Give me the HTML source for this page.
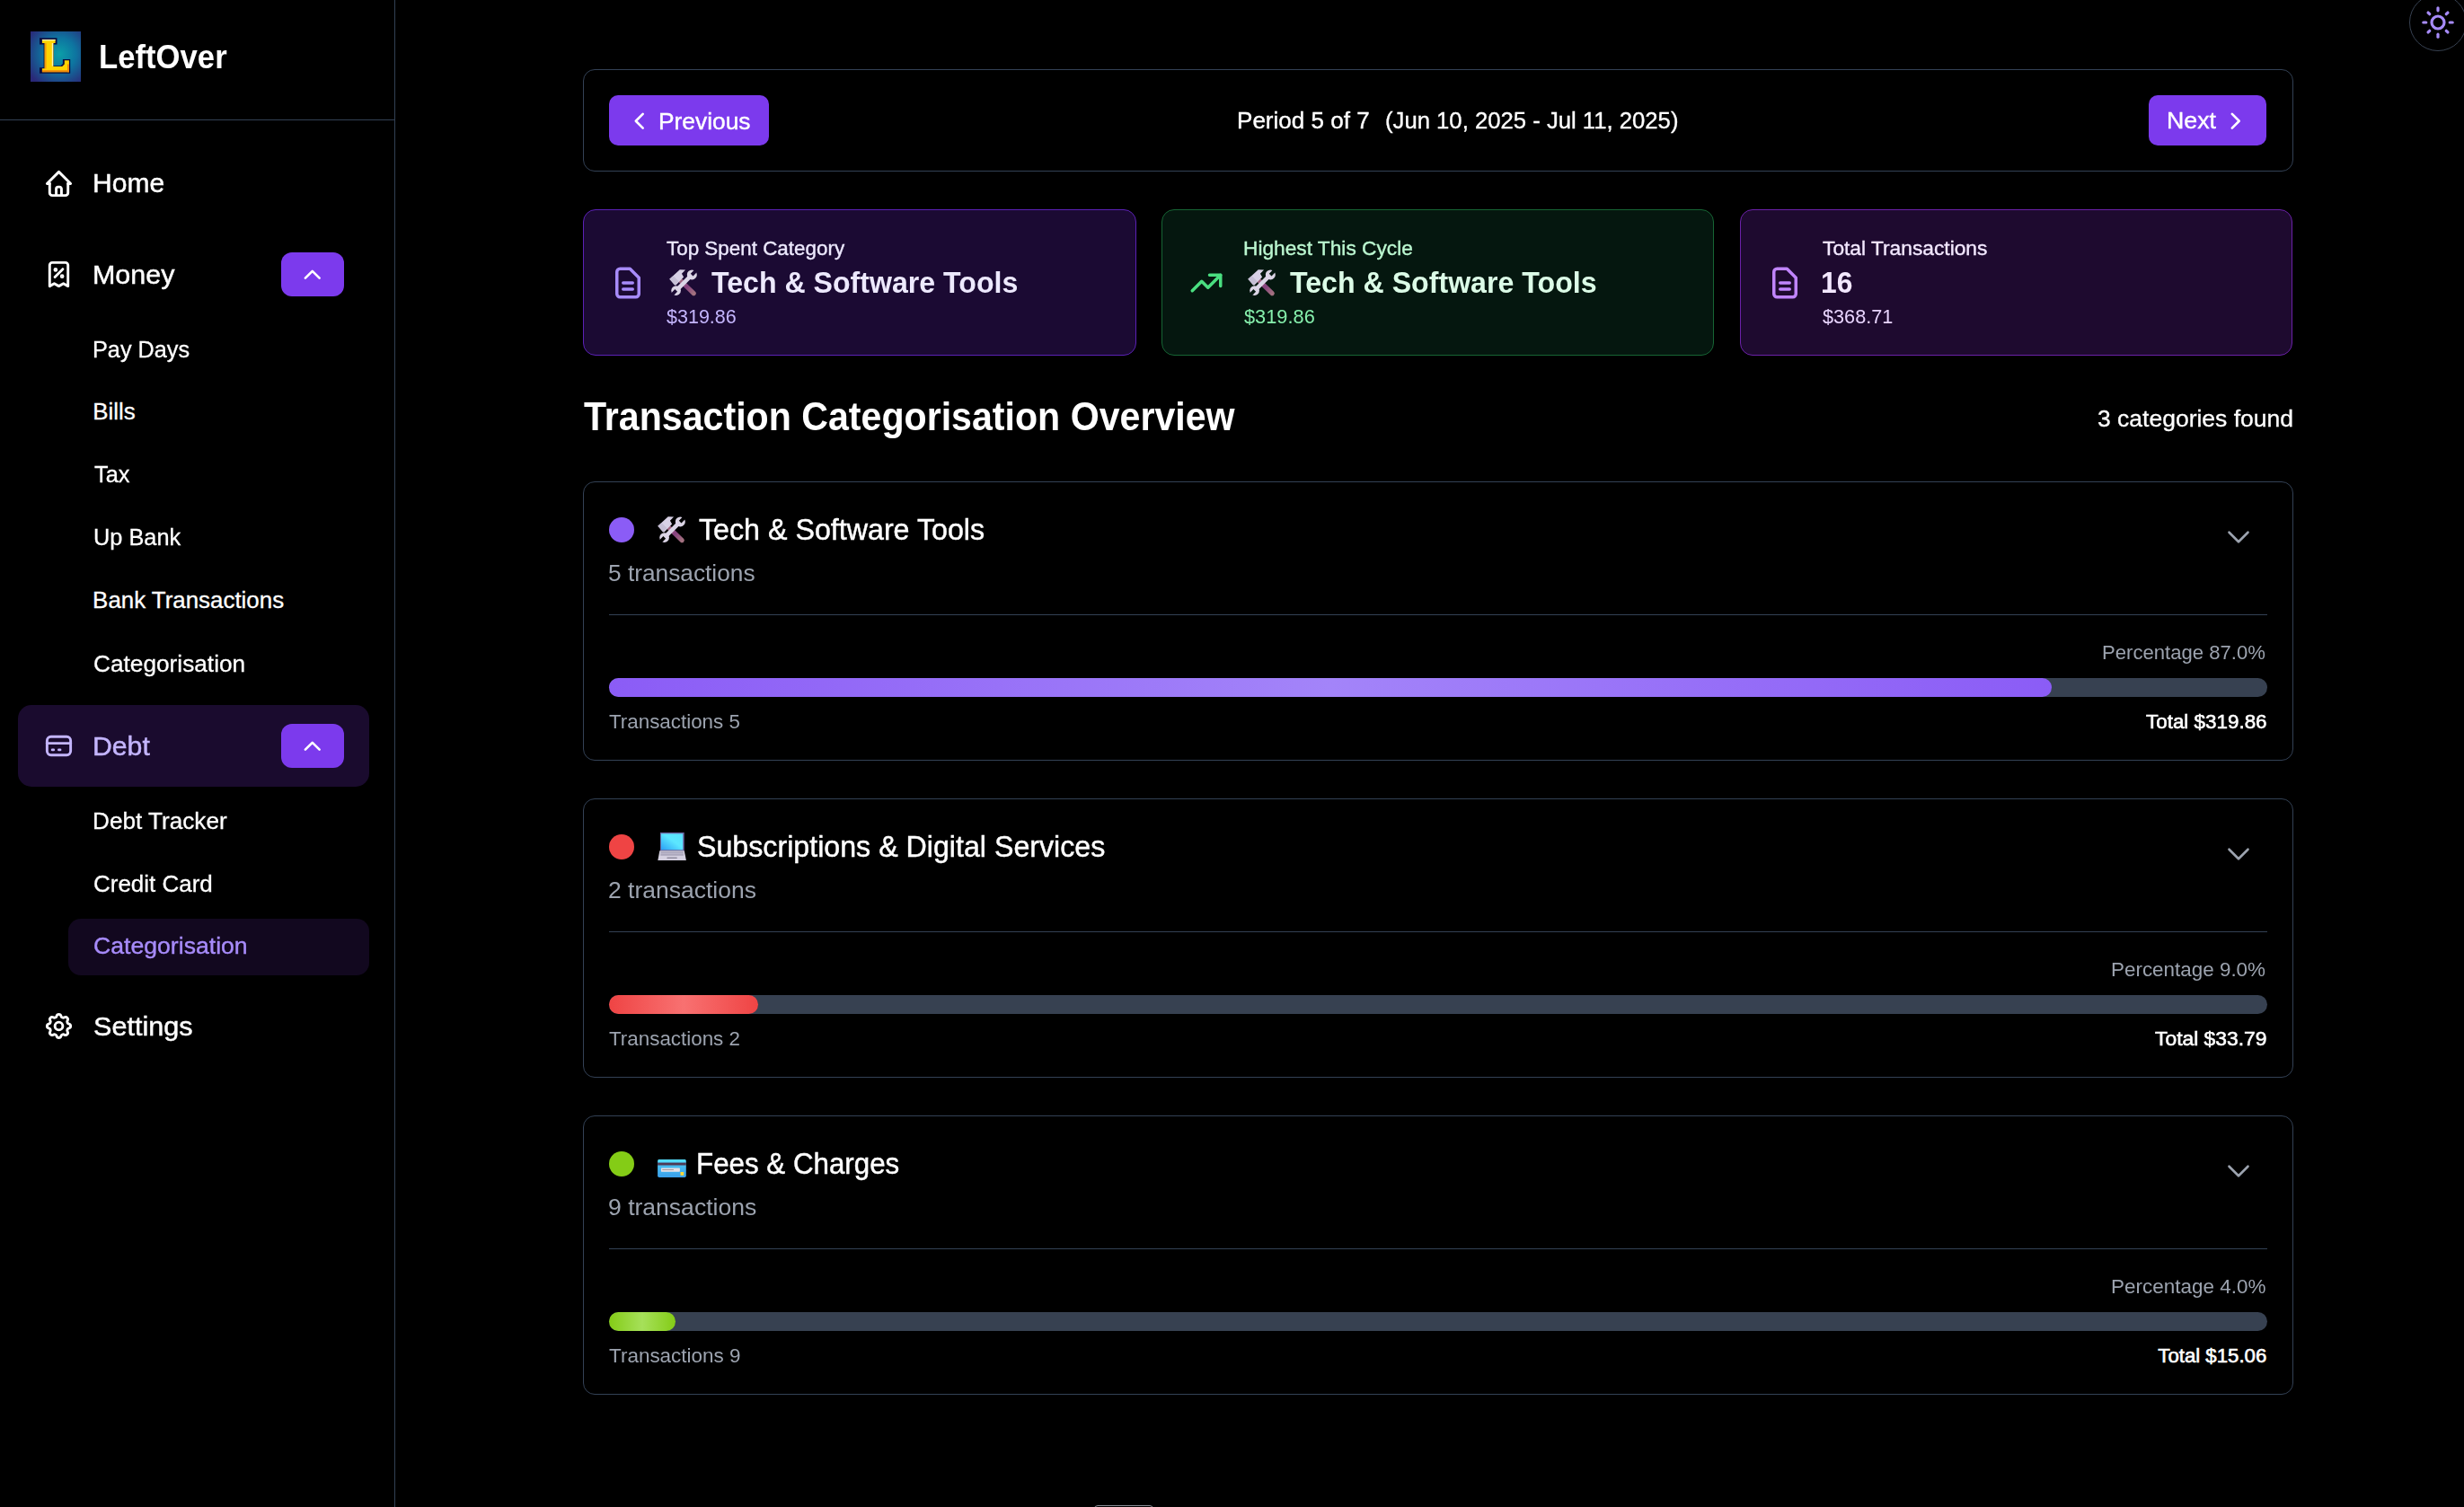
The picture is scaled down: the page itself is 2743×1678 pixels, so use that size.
<!DOCTYPE html>
<html><head><meta charset="utf-8"><title>LeftOver - Categorisation</title>
<style>
html,body{margin:0;padding:0;}
body{width:2743px;height:1678px;background:#000;position:relative;overflow:hidden;font-family:"Liberation Sans",sans-serif;}
.t{position:absolute;white-space:nowrap;line-height:1;font-family:"Liberation Sans",sans-serif;}
svg{overflow:visible}
</style></head><body>
<div style="position:absolute;left:439px;top:0px;width:1px;height:1678px;background:#334155;border-radius:0px;box-sizing:border-box;"></div>
<div style="position:absolute;left:0px;top:133px;width:439px;height:1px;background:#334155;border-radius:0px;box-sizing:border-box;"></div>
<svg style="position:absolute;left:34px;top:35px;" width="56" height="56" viewBox="0 0 56 56" fill="none">
<defs><radialGradient id="lg" cx="0.58" cy="0.45" r="0.72">
<stop offset="0" stop-color="#0b9ea8"/><stop offset="0.45" stop-color="#0e74a0"/><stop offset="1" stop-color="#2a2878"/></radialGradient>
</defs>
<rect width="56" height="56" fill="url(#lg)"/>
<path d="M10 7.2H29.5V14.6H25.8V38.3H33.6L35.9 36V31H44.2V46.8H10V40.2H14.6V14.6H10Z" fill="#0b0b3d"/>
<path d="M12.9 8.9H27.6V13H25.3V39.1H35.2L37.8 36.5V32.3H42.9V45.2H12.9V41.2H15.7V13H12.9Z" fill="#ffd400"/>
<path d="M12.9 8.9H27.6V10.3H12.9Z" fill="#fff3a8"/>
<path d="M15.7 13H17.6V41.5H15.7Z" fill="#f59e0b"/>
<path d="M12.9 43.2H42.9V45.2H12.9Z" fill="#f08a0b"/>
<path d="M23.8 13H25.3V38.5H23.8Z" fill="#fff6b0"/>
<path d="M41 36.5H42.9V45.2H41Z" fill="#f08a0b"/>
</svg>
<div class="t" style="left:110.43px;top:44.73px;font-size:37px;font-weight:700;color:#fff;transform:scaleX(0.9376);transform-origin:left top;">LeftOver</div>
<svg style="position:absolute;left:48px;top:187px;" width="35" height="35" viewBox="0 0 24 24" fill="none"><g stroke="#fff" stroke-width="2" stroke-linecap="round" stroke-linejoin="round"><path d="M5 12H3l9-9 9 9h-2"/><path d="M5 12v7a2 2 0 0 0 2 2h10a2 2 0 0 0 2-2v-7"/><path d="M10 21v-5a1.5 1.5 0 0 1 1.5-1.5h1a1.5 1.5 0 0 1 1.5 1.5v5"/></g></svg>
<div class="t" style="left:102.88px;top:188.79px;font-size:29.6px;font-weight:400;color:#fff;transform:scaleX(1.0146);transform-origin:left top;-webkit-text-stroke:0.45px #fff;">Home</div>
<svg style="position:absolute;left:48px;top:288px;" width="35" height="35" viewBox="0 0 24 24" fill="none"><g stroke="#fff" stroke-width="2" stroke-linecap="round" stroke-linejoin="round"><path d="M9 14l6-6"/><circle cx="9.5" cy="8.5" r=".6" fill="#fff"/><circle cx="14.5" cy="13.5" r=".6" fill="#fff"/><path d="M5 21V5a2 2 0 0 1 2-2h10a2 2 0 0 1 2 2v16l-3.5-2-3.5 2-3.5-2-3.5 2"/></g></svg>
<div class="t" style="left:102.85px;top:291.29px;font-size:29.6px;font-weight:400;color:#fff;transform:scaleX(1.0290);transform-origin:left top;-webkit-text-stroke:0.45px #fff;">Money</div>
<div style="position:absolute;left:313px;top:281px;width:70px;height:49px;background:#7c3aed;border-radius:12px;box-sizing:border-box;"></div>
<svg style="position:absolute;left:332.25px;top:289.75px;" width="31.5" height="31.5" viewBox="0 0 24 24" fill="none"><g stroke="#fff" stroke-width="2" stroke-linecap="round" stroke-linejoin="round"><path d="M6 15l6-6 6 6"/></g></svg>
<div class="t" style="left:103.17px;top:376.61px;font-size:25.9px;font-weight:400;color:#fff;transform:scaleX(0.9760);transform-origin:left top;-webkit-text-stroke:0.3px #fff;">Pay Days</div>
<div class="t" style="left:103.13px;top:446.21px;font-size:25.9px;font-weight:400;color:#fff;-webkit-text-stroke:0.3px #fff;">Bills</div>
<div class="t" style="left:104.75px;top:516.31px;font-size:25.9px;font-weight:400;color:#fff;transform:scaleX(0.9801);transform-origin:left top;-webkit-text-stroke:0.3px #fff;">Tax</div>
<div class="t" style="left:103.56px;top:586.41px;font-size:25.9px;font-weight:400;color:#fff;transform:scaleX(0.9784);transform-origin:left top;-webkit-text-stroke:0.3px #fff;">Up Bank</div>
<div class="t" style="left:103.12px;top:656.41px;font-size:25.9px;font-weight:400;color:#fff;-webkit-text-stroke:0.3px #fff;">Bank Transactions</div>
<div class="t" style="left:103.92px;top:726.51px;font-size:25.9px;font-weight:400;color:#fff;transform:scaleX(1.0131);transform-origin:left top;-webkit-text-stroke:0.3px #fff;">Categorisation</div>
<div style="position:absolute;left:20px;top:785px;width:391px;height:91px;background:#1a0b2e;border-radius:15px;box-sizing:border-box;"></div>
<svg style="position:absolute;left:48px;top:813px;" width="35" height="35" viewBox="0 0 24 24" fill="none"><g stroke="#c4b5fd" stroke-width="2" stroke-linecap="round" stroke-linejoin="round"><path d="M3 8a3 3 0 0 1 3-3h12a3 3 0 0 1 3 3v8a3 3 0 0 1-3 3H6a3 3 0 0 1-3-3z"/><path d="M3 10h18"/><path d="M7 15h1"/><path d="M12 15h1"/></g></svg>
<div class="t" style="left:102.87px;top:816.19px;font-size:29.6px;font-weight:400;color:#c4b5fd;transform:scaleX(1.0204);transform-origin:left top;-webkit-text-stroke:0.45px #c4b5fd;">Debt</div>
<div style="position:absolute;left:313px;top:806px;width:70px;height:49px;background:#7c3aed;border-radius:12px;box-sizing:border-box;"></div>
<svg style="position:absolute;left:332.25px;top:814.75px;" width="31.5" height="31.5" viewBox="0 0 24 24" fill="none"><g stroke="#fff" stroke-width="2" stroke-linecap="round" stroke-linejoin="round"><path d="M6 15l6-6 6 6"/></g></svg>
<div class="t" style="left:103.11px;top:901.91px;font-size:25.9px;font-weight:400;color:#fff;transform:scaleX(1.0097);transform-origin:left top;-webkit-text-stroke:0.3px #fff;">Debt Tracker</div>
<div class="t" style="left:103.93px;top:971.91px;font-size:25.9px;font-weight:400;color:#fff;transform:scaleX(1.0027);transform-origin:left top;-webkit-text-stroke:0.3px #fff;">Credit Card</div>
<div style="position:absolute;left:76px;top:1023px;width:335px;height:63px;background:#12081f;border-radius:14px;box-sizing:border-box;"></div>
<div class="t" style="left:103.96px;top:1041.11px;font-size:25.9px;font-weight:400;color:#a78bfa;transform:scaleX(1.0283);transform-origin:left top;-webkit-text-stroke:0.4px #a78bfa;">Categorisation</div>
<svg style="position:absolute;left:48px;top:1124.5px;" width="35" height="35" viewBox="0 0 24 24" fill="none"><g stroke="#fff" stroke-width="2" stroke-linecap="round" stroke-linejoin="round"><path d="M10.325 4.317c.426-1.756 2.924-1.756 3.35 0a1.724 1.724 0 0 0 2.573 1.066c1.543-.94 3.31.826 2.37 2.37a1.724 1.724 0 0 0 1.065 2.572c1.756.426 1.756 2.924 0 3.35a1.724 1.724 0 0 0-1.066 2.573c.94 1.543-.826 3.31-2.37 2.37a1.724 1.724 0 0 0-2.572 1.065c-.426 1.756-2.924 1.756-3.35 0a1.724 1.724 0 0 0-2.573-1.066c-1.543.94-3.31-.826-2.37-2.37a1.724 1.724 0 0 0-1.065-2.572c-1.756-.426-1.756-2.924 0-3.35a1.724 1.724 0 0 0 1.066-2.573c-.94-1.543.826-3.31 2.37-2.37 1 .608 2.296.07 2.572-1.065z"/><path d="M9 12a3 3 0 1 0 6 0a3 3 0 0 0-6 0"/></g></svg>
<div class="t" style="left:103.68px;top:1127.59px;font-size:29.6px;font-weight:400;color:#fff;transform:scaleX(1.0336);transform-origin:left top;-webkit-text-stroke:0.45px #fff;">Settings</div>
<div style="position:absolute;left:2682px;top:-7px;width:64px;height:64px;border:1.5px solid #374151;border-radius:50%;box-sizing:border-box"></div>
<svg style="position:absolute;left:2682px;top:-7px;" width="64" height="64" viewBox="0 0 64 64" fill="none"><circle cx="32" cy="32" r="7" stroke="#a78bfa" stroke-width="3.2"/><line x1="45.20" y1="32.00" x2="48.20" y2="32.00" stroke="#a78bfa" stroke-width="3.2" stroke-linecap="round"/><line x1="41.26" y1="41.26" x2="42.96" y2="42.96" stroke="#a78bfa" stroke-width="3.2" stroke-linecap="round"/><line x1="32.00" y1="45.20" x2="32.00" y2="48.20" stroke="#a78bfa" stroke-width="3.2" stroke-linecap="round"/><line x1="22.74" y1="41.26" x2="21.04" y2="42.96" stroke="#a78bfa" stroke-width="3.2" stroke-linecap="round"/><line x1="18.80" y1="32.00" x2="15.80" y2="32.00" stroke="#a78bfa" stroke-width="3.2" stroke-linecap="round"/><line x1="22.74" y1="22.74" x2="21.04" y2="21.04" stroke="#a78bfa" stroke-width="3.2" stroke-linecap="round"/><line x1="32.00" y1="18.80" x2="32.00" y2="15.80" stroke="#a78bfa" stroke-width="3.2" stroke-linecap="round"/><line x1="41.26" y1="22.74" x2="42.96" y2="21.04" stroke="#a78bfa" stroke-width="3.2" stroke-linecap="round"/></svg>
<div style="position:absolute;left:649px;top:77px;width:1904px;height:114px;background:none;border:1px solid #334155;border-radius:13px;box-sizing:border-box;"></div>
<div style="position:absolute;left:678px;top:106px;width:178px;height:56px;background:#7c3aed;border-radius:10px;box-sizing:border-box;"></div>
<svg style="position:absolute;left:695.5px;top:119px;" width="31.5" height="31.5" viewBox="0 0 24 24" fill="none"><g stroke="#fff" stroke-width="2" stroke-linecap="round" stroke-linejoin="round"><path d="M15 6l-6 6 6 6"/></g></svg>
<div class="t" style="left:732.54px;top:122.61px;font-size:25.9px;font-weight:400;color:#fff;transform:scaleX(1.0180);transform-origin:left top;-webkit-text-stroke:0.4px #fff;">Previous</div>
<div class="t" style="left:1377.47px;top:122.01px;font-size:25.9px;font-weight:400;color:#fff;transform:scaleX(1.0063);transform-origin:left top;-webkit-text-stroke:0.4px #fff;">Period 5 of 7</div>
<div class="t" style="left:1541.97px;top:122.01px;font-size:25.9px;font-weight:400;color:#fff;transform:scaleX(0.9919);transform-origin:left top;-webkit-text-stroke:0.35px #fff;">(Jun 10, 2025 - Jul 11, 2025)</div>
<div style="position:absolute;left:2392px;top:106px;width:131px;height:56px;background:#7c3aed;border-radius:10px;box-sizing:border-box;"></div>
<div class="t" style="left:2411.92px;top:122.31px;font-size:25.9px;font-weight:400;color:#fff;transform:scaleX(1.0325);transform-origin:left top;-webkit-text-stroke:0.4px #fff;">Next</div>
<svg style="position:absolute;left:2472.5px;top:119px;" width="31.5" height="31.5" viewBox="0 0 24 24" fill="none"><g stroke="#fff" stroke-width="2" stroke-linecap="round" stroke-linejoin="round"><path d="M9 6l6 6-6 6"/></g></svg>
<div style="position:absolute;left:649px;top:233px;width:616px;height:163px;background:#1b0a33;border:1.5px solid #5b21b6;border-radius:14px;box-sizing:border-box;"></div>
<svg style="position:absolute;left:677.5px;top:294px;" width="42" height="42" viewBox="0 0 24 24" fill="none"><g stroke="#a78bfa" stroke-width="2" stroke-linecap="round" stroke-linejoin="round"><path d="M5 5a2 2 0 0 1 2-2h6.3l5.7 5.7v10.3a2 2 0 0 1-2 2H7a2 2 0 0 1-2-2z"/><path d="M9 12h6"/><path d="M9 16h6"/></g></svg>
<div class="t" style="left:741.63px;top:265.54px;font-size:22.2px;font-weight:400;color:#ede9fe;transform:scaleX(1.0101);transform-origin:left top;-webkit-text-stroke:0.35px #ede9fe;">Top Spent Category</div>
<svg style="position:absolute;left:745.3px;top:299.6px;" width="31" height="31" viewBox="0 0 31 31" fill="none"><defs><linearGradient id="hd" x1="0" y1="0" x2="1" y2="1"><stop offset="0" stop-color="#a8707e"/><stop offset="0.55" stop-color="#86417f"/><stop offset="1" stop-color="#a2707f"/></linearGradient>
<linearGradient id="wr" x1="0" y1="1" x2="1" y2="0"><stop offset="0" stop-color="#e4d8f2"/><stop offset="0.5" stop-color="#d9d4e2"/><stop offset="1" stop-color="#e2d6ef"/></linearGradient>
<mask id="wm"><rect x="-5" y="-5" width="40" height="40" fill="#fff"/>
<rect x="-1.9" y="-7" width="3.8" height="7.2" fill="#000" transform="translate(25.3 5.9) rotate(45)"/>
<rect x="-1.9" y="-0.2" width="3.8" height="7.2" fill="#000" transform="translate(7.6 23.6) rotate(45)"/>
</mask></defs>
<path d="M10.2 10.2 L27.2 26.6" stroke="url(#hd)" stroke-width="5.2" stroke-linecap="round"/>
<path d="M0.32 10.69 L11.77 0.22 L18.04 0.43 L13.93 4.64 L16.09 8.53 L7.45 17.60 L6.05 17.39 Z" fill="#d8d1e6"/>
<path d="M0.32 10.69 L4.54 6.91 L10.58 13.18 L6.48 17.06 Z" fill="#c6bfd6"/>
<g mask="url(#wm)" fill="url(#wr)">
<path d="M7.6 23.6 L25.3 5.9" stroke="#dcd6e8" stroke-width="4.6" stroke-linecap="round"/>
<circle cx="25.3" cy="5.9" r="5.5"/>
<circle cx="7.6" cy="23.6" r="5.3"/>
</g>
</svg>
<div class="t" style="left:792.00px;top:297.86px;font-size:33.3px;font-weight:700;color:#ede9fe;transform:scaleX(0.9641);transform-origin:left top;">Tech &amp; Software Tools</div>
<div class="t" style="left:741.80px;top:341.54px;font-size:22.2px;font-weight:400;color:#c4b5fd;transform:scaleX(0.9692);transform-origin:left top;">$319.86</div>
<div style="position:absolute;left:1293px;top:233px;width:615px;height:163px;background:#05170f;border:1.5px solid #166534;border-radius:14px;box-sizing:border-box;"></div>
<svg style="position:absolute;left:1321.5px;top:294px;" width="42" height="42" viewBox="0 0 24 24" fill="none"><g stroke="#4ade80" stroke-width="2" stroke-linecap="round" stroke-linejoin="round"><path d="M3 17l6-6 4 4 8-8"/><path d="M14 7h7v7"/></g></svg>
<div class="t" style="left:1383.60px;top:265.54px;font-size:22.2px;font-weight:400;color:#bbf7d0;transform:scaleX(1.0231);transform-origin:left top;-webkit-text-stroke:0.35px #bbf7d0;">Highest This Cycle</div>
<svg style="position:absolute;left:1389.3px;top:299.6px;" width="31" height="31" viewBox="0 0 31 31" fill="none"><defs><linearGradient id="hd" x1="0" y1="0" x2="1" y2="1"><stop offset="0" stop-color="#a8707e"/><stop offset="0.55" stop-color="#86417f"/><stop offset="1" stop-color="#a2707f"/></linearGradient>
<linearGradient id="wr" x1="0" y1="1" x2="1" y2="0"><stop offset="0" stop-color="#e4d8f2"/><stop offset="0.5" stop-color="#d9d4e2"/><stop offset="1" stop-color="#e2d6ef"/></linearGradient>
<mask id="wm"><rect x="-5" y="-5" width="40" height="40" fill="#fff"/>
<rect x="-1.9" y="-7" width="3.8" height="7.2" fill="#000" transform="translate(25.3 5.9) rotate(45)"/>
<rect x="-1.9" y="-0.2" width="3.8" height="7.2" fill="#000" transform="translate(7.6 23.6) rotate(45)"/>
</mask></defs>
<path d="M10.2 10.2 L27.2 26.6" stroke="url(#hd)" stroke-width="5.2" stroke-linecap="round"/>
<path d="M0.32 10.69 L11.77 0.22 L18.04 0.43 L13.93 4.64 L16.09 8.53 L7.45 17.60 L6.05 17.39 Z" fill="#d8d1e6"/>
<path d="M0.32 10.69 L4.54 6.91 L10.58 13.18 L6.48 17.06 Z" fill="#c6bfd6"/>
<g mask="url(#wm)" fill="url(#wr)">
<path d="M7.6 23.6 L25.3 5.9" stroke="#dcd6e8" stroke-width="4.6" stroke-linecap="round"/>
<circle cx="25.3" cy="5.9" r="5.5"/>
<circle cx="7.6" cy="23.6" r="5.3"/>
</g>
</svg>
<div class="t" style="left:1435.80px;top:297.86px;font-size:33.3px;font-weight:700;color:#dcfce7;transform:scaleX(0.9650);transform-origin:left top;">Tech &amp; Software Tools</div>
<div class="t" style="left:1385.20px;top:341.54px;font-size:22.2px;font-weight:400;color:#86efac;transform:scaleX(0.9818);transform-origin:left top;">$319.86</div>
<div style="position:absolute;left:1937px;top:233px;width:615px;height:163px;background:#1e0a2f;border:1.5px solid #6b21a8;border-radius:14px;box-sizing:border-box;"></div>
<svg style="position:absolute;left:1965.5px;top:294px;" width="42" height="42" viewBox="0 0 24 24" fill="none"><g stroke="#c084fc" stroke-width="2" stroke-linecap="round" stroke-linejoin="round"><path d="M5 5a2 2 0 0 1 2-2h6.3l5.7 5.7v10.3a2 2 0 0 1-2 2H7a2 2 0 0 1-2-2z"/><path d="M9 12h6"/><path d="M9 16h6"/></g></svg>
<div class="t" style="left:2028.82px;top:265.54px;font-size:22.2px;font-weight:400;color:#f3e8ff;transform:scaleX(1.0256);transform-origin:left top;-webkit-text-stroke:0.35px #f3e8ff;">Total Transactions</div>
<div class="t" style="left:2027.01px;top:297.86px;font-size:33.3px;font-weight:700;color:#f3e8ff;transform:scaleX(0.9552);transform-origin:left top;">16</div>
<div class="t" style="left:2029.00px;top:341.54px;font-size:22.2px;font-weight:400;color:#e9d5ff;transform:scaleX(0.9767);transform-origin:left top;">$368.71</div>
<div class="t" style="left:650.20px;top:443.46px;font-size:43.6px;font-weight:700;color:#fff;transform:scaleX(0.9435);transform-origin:left top;">Transaction Categorisation Overview</div>
<div class="t" style="left:2334.63px;top:453.61px;font-size:25.9px;font-weight:400;color:#fff;transform:scaleX(1.0235);transform-origin:left top;-webkit-text-stroke:0.3px #fff;">3 categories found</div>
<div style="position:absolute;left:649px;top:536px;width:1904px;height:311px;background:none;border:1px solid #334155;border-radius:13px;box-sizing:border-box;"></div>
<div style="position:absolute;left:678px;top:576px;width:28px;height:28px;background:#8b5cf6;border-radius:14px;box-sizing:border-box;"></div>
<svg style="position:absolute;left:732px;top:575px;" width="31" height="31" viewBox="0 0 31 31" fill="none"><defs><linearGradient id="hd" x1="0" y1="0" x2="1" y2="1"><stop offset="0" stop-color="#a8707e"/><stop offset="0.55" stop-color="#86417f"/><stop offset="1" stop-color="#a2707f"/></linearGradient>
<linearGradient id="wr" x1="0" y1="1" x2="1" y2="0"><stop offset="0" stop-color="#e4d8f2"/><stop offset="0.5" stop-color="#d9d4e2"/><stop offset="1" stop-color="#e2d6ef"/></linearGradient>
<mask id="wm"><rect x="-5" y="-5" width="40" height="40" fill="#fff"/>
<rect x="-1.9" y="-7" width="3.8" height="7.2" fill="#000" transform="translate(25.3 5.9) rotate(45)"/>
<rect x="-1.9" y="-0.2" width="3.8" height="7.2" fill="#000" transform="translate(7.6 23.6) rotate(45)"/>
</mask></defs>
<path d="M10.2 10.2 L27.2 26.6" stroke="url(#hd)" stroke-width="5.2" stroke-linecap="round"/>
<path d="M0.32 10.69 L11.77 0.22 L18.04 0.43 L13.93 4.64 L16.09 8.53 L7.45 17.60 L6.05 17.39 Z" fill="#d8d1e6"/>
<path d="M0.32 10.69 L4.54 6.91 L10.58 13.18 L6.48 17.06 Z" fill="#c6bfd6"/>
<g mask="url(#wm)" fill="url(#wr)">
<path d="M7.6 23.6 L25.3 5.9" stroke="#dcd6e8" stroke-width="4.6" stroke-linecap="round"/>
<circle cx="25.3" cy="5.9" r="5.5"/>
<circle cx="7.6" cy="23.6" r="5.3"/>
</g>
</svg>
<div class="t" style="left:777.71px;top:572.86px;font-size:33.3px;font-weight:400;color:#fff;transform:scaleX(0.9673);transform-origin:left top;-webkit-text-stroke:0.45px #fff;">Tech &amp; Software Tools</div>
<div class="t" style="left:677.18px;top:625.71px;font-size:25.2px;font-weight:400;color:#9ca3af;transform:scaleX(1.0431);transform-origin:left top;">5 transactions</div>
<svg style="position:absolute;left:2471.4px;top:576.5px;" width="42" height="42" viewBox="0 0 24 24" fill="none"><g stroke="#9ca3af" stroke-width="1.5" stroke-linecap="round" stroke-linejoin="round"><path d="M6 9l6 6 6-6"/></g></svg>
<div style="position:absolute;left:678px;top:684px;width:1846px;height:1px;background:#334155;border-radius:0px;box-sizing:border-box;"></div>
<div class="t" style="left:2340.27px;top:716.24px;font-size:22.2px;font-weight:400;color:#9ca3af;transform:scaleX(0.9963);transform-origin:left top;">Percentage 87.0%</div>
<div style="position:absolute;left:678px;top:755px;width:1846px;height:21px;background:#374151;border-radius:10.5px;box-sizing:border-box;"></div>
<div style="position:absolute;left:678px;top:755px;width:1606.0px;height:21px;background:linear-gradient(90deg,#8b5cf6,#a384f9 50%,#8b5cf6);border-radius:10.5px;box-sizing:border-box;"></div>
<div class="t" style="left:677.65px;top:792.74px;font-size:22.2px;font-weight:400;color:#9ca3af;transform:scaleX(1.0081);transform-origin:left top;">Transactions 5</div>
<div class="t" style="left:2388.95px;top:793.04px;font-size:22.2px;font-weight:400;color:#fff;transform:scaleX(1.0101);transform-origin:left top;-webkit-text-stroke:0.6px #fff;">Total $319.86</div>
<div style="position:absolute;left:649px;top:889px;width:1904px;height:311px;background:none;border:1px solid #334155;border-radius:13px;box-sizing:border-box;"></div>
<div style="position:absolute;left:678px;top:929px;width:28px;height:28px;background:#ef4444;border-radius:14px;box-sizing:border-box;"></div>
<svg style="position:absolute;left:732px;top:925.6px;" width="32" height="32" viewBox="0 0 32 32" fill="none"><defs><linearGradient id="scr" x1="0" y1="1" x2="1" y2="0"><stop offset="0" stop-color="#2a9ff5"/><stop offset="0.55" stop-color="#5ce6ff"/><stop offset="1" stop-color="#58e2fb"/></linearGradient></defs>
<rect x="3" y="0.9" width="26.7" height="20.6" fill="#6a62a0"/>
<rect x="3.9" y="2.3" width="24.3" height="18" fill="url(#scr)"/>
<path d="M2.3 21.2H29.8L31.9 32H0.3Z" fill="#d4d0e0"/>
<rect x="3.3" y="22.3" width="25.6" height="4.5" fill="#aca8bd"/>
<path d="M3.3 24.5H28.9" stroke="#c8c4d6" stroke-width="0.5"/>
<rect x="10.4" y="28.4" width="11.4" height="1.6" rx="0.6" fill="#8f8b9f"/>
</svg>
<div class="t" style="left:776.41px;top:925.86px;font-size:33.3px;font-weight:400;color:#fff;transform:scaleX(0.9666);transform-origin:left top;-webkit-text-stroke:0.45px #fff;">Subscriptions &amp; Digital Services</div>
<div class="t" style="left:676.76px;top:978.71px;font-size:25.2px;font-weight:400;color:#9ca3af;transform:scaleX(1.0515);transform-origin:left top;">2 transactions</div>
<svg style="position:absolute;left:2471.4px;top:929.5px;" width="42" height="42" viewBox="0 0 24 24" fill="none"><g stroke="#9ca3af" stroke-width="1.5" stroke-linecap="round" stroke-linejoin="round"><path d="M6 9l6 6 6-6"/></g></svg>
<div style="position:absolute;left:678px;top:1037px;width:1846px;height:1px;background:#334155;border-radius:0px;box-sizing:border-box;"></div>
<div class="t" style="left:2350.05px;top:1069.24px;font-size:22.2px;font-weight:400;color:#9ca3af;transform:scaleX(1.0106);transform-origin:left top;">Percentage 9.0%</div>
<div style="position:absolute;left:678px;top:1108px;width:1846px;height:21px;background:#374151;border-radius:10.5px;box-sizing:border-box;"></div>
<div style="position:absolute;left:678px;top:1108px;width:166.1px;height:21px;background:linear-gradient(90deg,#ef4444,#f87171 50%,#ef4444);border-radius:10.5px;box-sizing:border-box;"></div>
<div class="t" style="left:677.65px;top:1145.74px;font-size:22.2px;font-weight:400;color:#9ca3af;transform:scaleX(1.0088);transform-origin:left top;">Transactions 2</div>
<div class="t" style="left:2398.95px;top:1146.04px;font-size:22.2px;font-weight:400;color:#fff;transform:scaleX(1.0298);transform-origin:left top;-webkit-text-stroke:0.6px #fff;">Total $33.79</div>
<div style="position:absolute;left:649px;top:1242px;width:1904px;height:311px;background:none;border:1px solid #334155;border-radius:13px;box-sizing:border-box;"></div>
<div style="position:absolute;left:678px;top:1282px;width:28px;height:28px;background:#84cc16;border-radius:14px;box-sizing:border-box;"></div>
<svg style="position:absolute;left:732px;top:1289.8px;" width="32" height="22" viewBox="0 0 32 22" fill="none"><defs><linearGradient id="cc" x1="0" y1="0" x2="0" y2="1"><stop offset="0" stop-color="#4fcdf6"/><stop offset="1" stop-color="#3a9fea"/></linearGradient></defs>
<rect x="0.1" y="1.1" width="31.7" height="19.9" rx="1.8" fill="url(#cc)"/>
<rect x="0.6" y="1.1" width="30.7" height="3.2" rx="1.2" fill="#56dcfb"/>
<rect x="0.1" y="4.6" width="31.7" height="2.9" fill="#4f3a55"/>
<rect x="3.9" y="10.4" width="21" height="4.3" rx="0.6" fill="#e6e1e6"/>
<rect x="5.3" y="12.1" width="12.6" height="0.9" fill="#9a949a"/>
<rect x="25.5" y="15" width="3.7" height="3.8" rx="0.4" fill="#fdd835"/>
</svg>
<div class="t" style="left:775.06px;top:1278.86px;font-size:33.3px;font-weight:400;color:#fff;transform:scaleX(0.9405);transform-origin:left top;-webkit-text-stroke:0.45px #fff;">Fees &amp; Charges</div>
<div class="t" style="left:676.76px;top:1331.71px;font-size:25.2px;font-weight:400;color:#9ca3af;transform:scaleX(1.0535);transform-origin:left top;">9 transactions</div>
<svg style="position:absolute;left:2471.4px;top:1282.5px;" width="42" height="42" viewBox="0 0 24 24" fill="none"><g stroke="#9ca3af" stroke-width="1.5" stroke-linecap="round" stroke-linejoin="round"><path d="M6 9l6 6 6-6"/></g></svg>
<div style="position:absolute;left:678px;top:1390px;width:1846px;height:1px;background:#334155;border-radius:0px;box-sizing:border-box;"></div>
<div class="t" style="left:2349.94px;top:1422.24px;font-size:22.2px;font-weight:400;color:#9ca3af;transform:scaleX(1.0130);transform-origin:left top;">Percentage 4.0%</div>
<div style="position:absolute;left:678px;top:1461px;width:1846px;height:21px;background:#374151;border-radius:10.5px;box-sizing:border-box;"></div>
<div style="position:absolute;left:678px;top:1461px;width:73.8px;height:21px;background:linear-gradient(90deg,#84cc16,#a6e05a 50%,#84cc16);border-radius:10.5px;box-sizing:border-box;"></div>
<div class="t" style="left:677.65px;top:1498.74px;font-size:22.2px;font-weight:400;color:#9ca3af;transform:scaleX(1.0130);transform-origin:left top;">Transactions 9</div>
<div class="t" style="left:2402.35px;top:1499.04px;font-size:22.2px;font-weight:400;color:#fff;-webkit-text-stroke:0.6px #fff;">Total $15.06</div>
<div style="position:absolute;left:1217.5px;top:1676px;width:66px;height:20px;border:1.5px solid #8a8f98;border-radius:4px;box-sizing:border-box"></div>
</body></html>
